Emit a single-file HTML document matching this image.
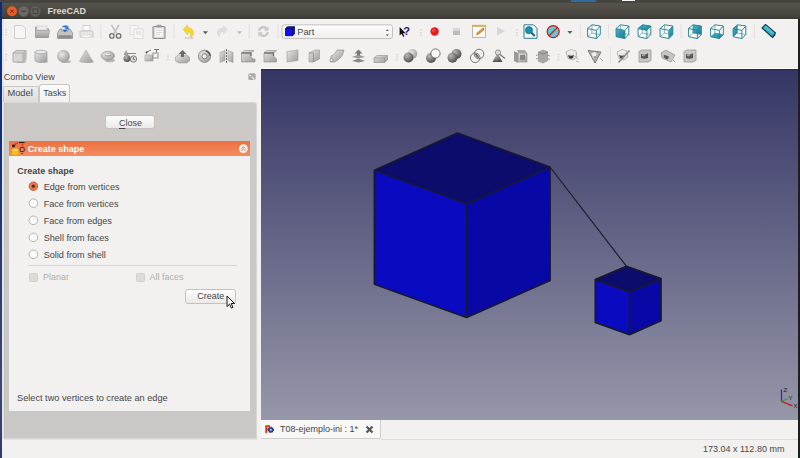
<!DOCTYPE html><html><head><meta charset="utf-8"><style>
*{margin:0;padding:0;box-sizing:border-box}
html,body{width:800px;height:458px;overflow:hidden;background:#f2f1f0;font-family:"Liberation Sans",sans-serif}
.a{position:absolute}
.t{position:absolute;white-space:nowrap;line-height:1}
</style></head><body><div class="a" style="left:0px;top:0px;width:800px;height:19px;background:linear-gradient(#5b5850,#4e4b45 50%,#403e39)"></div>
<div class="a" style="left:0px;top:0px;width:800px;height:2.6px;background:#47453f"></div>
<div class="a" style="left:0px;top:18.2px;width:800px;height:1px;background:#37352f"></div>
<div class="a" style="left:0px;top:19.2px;width:800px;height:1.3px;background:#f9f9f7"></div>
<div class="a" style="left:571px;top:0px;width:25px;height:1.6px;background:#2a7ac0;opacity:.75"></div>
<div class="a" style="left:622px;top:0px;width:12.5px;height:1.2px;background:#f4f4f4"></div>
<svg class="a" style="left:0px;top:0px" width="100" height="19" viewBox="0 0 100 19"><circle cx="12" cy="11.3" r="5" fill="#ec5a26"/><path d="M10.4 9.7l3.2 3.2M13.6 9.7l-3.2 3.2" stroke="#6e2e16" stroke-width="1"/><circle cx="23.6" cy="11.3" r="5.2" fill="#6a6964" stroke="#55544f" stroke-width=".6"/><path d="M21.2 11.3h4.8" stroke="#45443f" stroke-width="1.2"/><circle cx="35.4" cy="11.3" r="5.2" fill="#62615c" stroke="#55544f" stroke-width=".6"/><rect x="33" y="8.9" width="4.8" height="4.8" fill="none" stroke="#45443f" stroke-width="1"/></svg>
<div class="t" style="left:47.5px;top:6.98px;font-size:9px;color:#dfdbd2;font-weight:bold;">FreeCAD</div>
<div class="a" style="left:0px;top:2px;width:2.4px;height:456px;background:linear-gradient(#0a2c80,#12307a 30%,#2a3c74 60%,#3a4a72 85%,#2e3c68)"></div>
<div class="a" style="left:2.4px;top:19px;width:1.2px;height:420px;background:#e6e4e1"></div>
<div class="a" style="left:798px;top:19px;width:1px;height:439px;background:#d8d6d3"></div>
<div class="a" style="left:798.3px;top:19px;width:1.7px;height:439px;background:#1e1e1e"></div>
<svg class="a" style="left:0px;top:0px" width="800" height="70" viewBox="0 0 800 70"><defs><linearGradient id="gG" x1="0" y1="0" x2="1" y2="1"><stop offset="0" stop-color="#e6e6e6"/><stop offset="1" stop-color="#9a9a9a"/></linearGradient><linearGradient id="gL" x1="0" y1="0" x2="0" y2="1"><stop offset="0" stop-color="#f4f4f4"/><stop offset="1" stop-color="#d8d8d8"/></linearGradient><radialGradient id="gS" cx=".35" cy=".35" r=".7"><stop offset="0" stop-color="#e8e8e8"/><stop offset="1" stop-color="#9c9c9c"/></radialGradient><radialGradient id="gD" cx=".35" cy=".3" r=".75"><stop offset="0" stop-color="#b8b8b8"/><stop offset="1" stop-color="#4a4a4a"/></radialGradient><linearGradient id="gT" x1="0" y1="0" x2="1" y2="1"><stop offset="0" stop-color="#4ab8d0"/><stop offset="1" stop-color="#137a92"/></linearGradient><linearGradient id="gCombo" x1="0" y1="0" x2="0" y2="1"><stop offset="0" stop-color="#fdfdfd"/><stop offset="1" stop-color="#efeeec"/></linearGradient></defs><rect x="5" y="29.0" width="2" height="1.2" fill="#d8d6d1"/><rect x="5" y="31.5" width="2" height="1.2" fill="#d8d6d1"/><rect x="5" y="34.0" width="2" height="1.2" fill="#d8d6d1"/><rect x="5" y="54.0" width="2" height="1.2" fill="#d8d6d1"/><rect x="5" y="56.5" width="2" height="1.2" fill="#d8d6d1"/><rect x="5" y="59.0" width="2" height="1.2" fill="#d8d6d1"/><path d="M14.5 25.5h8l3 3v10h-11z" fill="#f6f6f6" stroke="#cfcfcf" stroke-width="1"/><defs><linearGradient id="gF" x1="0" y1="0" x2="0" y2="1"><stop offset="0" stop-color="#c8c8c8"/><stop offset="1" stop-color="#9c9c9c"/></linearGradient></defs><path d="M35.5 27h5l1 1.5h7v9h-13z" fill="#a8a8a8" stroke="#9a9a9a" stroke-width=".7"/><rect x="37" y="26" width="10" height="4" fill="#ececec" stroke="#c8c8c8" stroke-width=".5"/><path d="M35.5 30.5h14.5l-2 7h-12.5z" fill="url(#gF)" stroke="#999" stroke-width=".5"/><path d="M57.5 33l2.5-4h2v2h6v-2h2l2.5 4v5.5h-15z" fill="#c4c4c4" stroke="#8e8e8e" stroke-width=".8"/><rect x="58.3" y="35.3" width="13.4" height="2.6" fill="#8a8a8a"/><path d="M61.5 27.5c1.5-2.5 4.5-3 6.5-1.5v-1l1 4.5-4.5-.5 1.5-1c-1.5-1-3-.8-4.5-.5z" fill="#3b7fd0"/><path d="M62.5 29.5h5l-2.5 3z" fill="#2f6fc0"/><rect x="83" y="25.5" width="7" height="5" fill="#fafafa" stroke="#cfcfcf"/><path d="M80 31h13v6h-13z" fill="#e6e6e6" stroke="#c8c8c8"/><rect x="82" y="35" width="9" height="2.5" fill="#f6f6f6" stroke="#cfcfcf" stroke-width=".6"/><rect x="100.5" y="24" width="1" height="15" fill="#e2e0dc"/><path d="M111.5 24.8l5 8.6M119 24.8l-5 8.6" stroke="#c0c0c0" stroke-width="1.6"/><circle cx="111.9" cy="35.9" r="2.2" fill="none" stroke="#707070" stroke-width="1.3"/><circle cx="118.6" cy="35.9" r="2.2" fill="none" stroke="#707070" stroke-width="1.3"/><rect x="130" y="25.5" width="8" height="9" fill="#f4f4f4" stroke="#e0e0e0"/><rect x="134" y="29" width="9" height="9.5" fill="#f6f6f6" stroke="#dcdcdc"/><rect x="136" y="31" width="5" height="4" fill="#e6e6e6"/><rect x="153" y="26.5" width="12" height="12" rx="1" fill="#d8d8d8" stroke="#8e8e8e" stroke-width="1.1"/><rect x="155" y="28.3" width="8" height="8.5" fill="#f6f6f6"/><path d="M156 30.5h6M156 32.5h6M156 34.5h4" stroke="#cfcfcf" stroke-width=".7"/><rect x="156.5" y="24.8" width="5" height="2.6" rx=".6" fill="#a0a0a0"/><rect x="173.5" y="24" width="1" height="15" fill="#e2e0dc"/><ellipse cx="189" cy="38" rx="5" ry="1.2" fill="#d8d8d8"/><path d="M183 29.5l4.5-4.5v2.7c3.8 0 6 2.2 6 5.3 0 2-1.2 3.6-2.8 4.5 .8-3-1-5.5-3.2-5.5v3z" fill="#f4d830" stroke="#dcc010" stroke-width=".5"/><path d="M202.8 31.2h5.2l-2.6 3z" fill="#5e5e5e"/><path d="M227.5 29.5l-4.5-4.5v2.7c-3.8 0-6 2.2-6 5.3 0 2 1.2 3.6 2.8 4.5-.8-3 1-5.5 3.2-5.5v3z" fill="#dcdcdc"/><path d="M237 31.2h5l-2.5 3z" fill="#bdbdbd"/><rect x="248.8" y="24" width="1" height="15" fill="#e2e0dc"/><path d="M258 31a5.3 5.3 0 0 1 9.2-3.5l1.3-1.3v4.6h-4.6l1.5-1.5a3.2 3.2 0 0 0-5.3 1.7z" fill="#c8c8c8"/><path d="M268.8 32a5.3 5.3 0 0 1-9.2 3.5l-1.3 1.3v-4.6h4.6l-1.5 1.5a3.2 3.2 0 0 0 5.3-1.7z" fill="#c8c8c8"/><rect x="277.5" y="24" width="1" height="15" fill="#e2e0dc"/><rect x="282" y="24.8" width="110.5" height="13.8" rx="2.5" fill="url(#gCombo)" stroke="#c3c0bc" stroke-width="1"/><path d="M285.5 28.5l2-1.8h7v7.2l-2 1.8h-7z" fill="#1010e8" stroke="#050560" stroke-width=".8"/><path d="M285.5 28.5h7v7.2M292.5 28.5l2-1.8" stroke="#050560" stroke-width=".7" fill="none"/><path d="M385.8 31h3l-1.5-1.8zM385.8 34.5h3l-1.5 1.8z" fill="#555"/><text x="403.3" y="35.2" font-size="11" font-weight="bold" fill="#16168a" font-family="Liberation Sans">?</text><path d="M399.6 27v8.6l2-1.9 1.6 3.2 1.2-.6-1.5-3.1h2.8z" fill="#111"/><rect x="420" y="29.5" width="2" height="1.2" fill="#d8d6d1"/><rect x="420" y="32.0" width="2" height="1.2" fill="#d8d6d1"/><rect x="420" y="34.5" width="2" height="1.2" fill="#d8d6d1"/><circle cx="434.6" cy="31.5" r="4.2" fill="#e81c1c"/><circle cx="433.6" cy="30.3" r="1.6" fill="#f67070" opacity=".6"/><rect x="453" y="28" width="7" height="7" fill="#bcbcbc"/><rect x="453" y="28" width="7" height="3" fill="#d6d6d6"/><rect x="472.5" y="25.5" width="13" height="12" fill="#fbfbf6" stroke="#a8a89c" stroke-width=".8"/><rect x="472.5" y="24.8" width="13" height="2.2" fill="#cdb868"/><path d="M476.5 35l.8-2.2 5.2-4.2 1.3 1.3-5.2 4.2z" fill="#e8962a" stroke="#9a6018" stroke-width=".5"/><path d="M482.5 28.6l1.3 1.3.9-.8-1.3-1.3z" fill="#e05050"/><path d="M497 26.8v8.7l8-4.35z" fill="#d6d6d6"/><rect x="516" y="29.5" width="2" height="1.2" fill="#d8d6d1"/><rect x="516" y="32.0" width="2" height="1.2" fill="#d8d6d1"/><rect x="516" y="34.5" width="2" height="1.2" fill="#d8d6d1"/><path d="M524 24.8h9.5l3.5 3.5v10h-13z" fill="#f6fafb" stroke="#2f7d90" stroke-width="1"/><circle cx="529" cy="30.2" r="3.6" fill="#1d8fb0" stroke="#0e5a70" stroke-width=".6"/><path d="M531.5 32.8l3.2 3.2" stroke="#1a6a80" stroke-width="2.2"/><circle cx="553.2" cy="31.6" r="5.6" fill="#5ac8d8"/><path d="M549.5 35l7.5-7.2" stroke="#f0e060" stroke-width="1.4"/><circle cx="553.2" cy="31.6" r="6" fill="none" stroke="#b71c1c" stroke-width="1.3"/><path d="M549 35.8l8.4-8.4" stroke="#b71c1c" stroke-width="1.3"/><path d="M567.3 31h5.2l-2.6 3z" fill="#5e5e5e"/><rect x="580" y="24" width="1" height="15" fill="#e2e0dc"/><polygon points="587.5,28.6 592.0,24.8 600.3,26.0 600.3,34.5 596.4,38.6 587.7,36.7" fill="#fbfdfd"/><polygon points="587.5,28.6 592.0,24.8 600.3,26.0 600.3,34.5 596.4,38.6 587.7,36.7" fill="none" stroke="#2f8698" stroke-width="1" stroke-linejoin="round"/><path d="M587.5 28.6L596.4 30.4L600.3 26.0M596.4 30.4L596.4 38.6" stroke="#2f8698" stroke-width="1" fill="none"/><path d="M592.0 24.8L591.8 33.1L600.3 34.5M591.8 33.1L587.7 36.7" stroke="#2f8698" stroke-width=".8" fill="none" opacity=".75"/><rect x="608" y="24" width="1" height="15" fill="#e2e0dc"/><polygon points="616.0,28.6 620.5,24.8 628.8,26.0 628.8,34.5 624.9,38.6 616.2,36.7" fill="#fbfdfd"/><polygon points="616.0,28.6 624.9,30.4 624.9,38.6 616.2,36.7" fill="url(#gT)"/><polygon points="616.0,28.6 620.5,24.8 628.8,26.0 628.8,34.5 624.9,38.6 616.2,36.7" fill="none" stroke="#2f8698" stroke-width="1" stroke-linejoin="round"/><path d="M616.0 28.6L624.9 30.4L628.8 26.0M624.9 30.4L624.9 38.6" stroke="#2f8698" stroke-width="1" fill="none"/><path d="M620.5 24.8L620.3 33.1L628.8 34.5M620.3 33.1L616.2 36.7" stroke="#2f8698" stroke-width=".8" fill="none" opacity=".75"/><polygon points="638.0,28.6 642.5,24.8 650.8,26.0 650.8,34.5 646.9,38.6 638.2,36.7" fill="#fbfdfd"/><polygon points="638.0,28.6 646.9,30.4 650.8,26.0 642.5,24.8" fill="url(#gT)"/><polygon points="638.0,28.6 642.5,24.8 650.8,26.0 650.8,34.5 646.9,38.6 638.2,36.7" fill="none" stroke="#2f8698" stroke-width="1" stroke-linejoin="round"/><path d="M638.0 28.6L646.9 30.4L650.8 26.0M646.9 30.4L646.9 38.6" stroke="#2f8698" stroke-width="1" fill="none"/><path d="M642.5 24.8L642.3 33.1L650.8 34.5M642.3 33.1L638.2 36.7" stroke="#2f8698" stroke-width=".8" fill="none" opacity=".75"/><polygon points="660.0,28.6 664.5,24.8 672.8,26.0 672.8,34.5 668.9,38.6 660.2,36.7" fill="#fbfdfd"/><polygon points="668.9,30.4 672.8,26.0 672.8,34.5 668.9,38.6" fill="url(#gT)"/><polygon points="660.0,28.6 664.5,24.8 672.8,26.0 672.8,34.5 668.9,38.6 660.2,36.7" fill="none" stroke="#2f8698" stroke-width="1" stroke-linejoin="round"/><path d="M660.0 28.6L668.9 30.4L672.8 26.0M668.9 30.4L668.9 38.6" stroke="#2f8698" stroke-width="1" fill="none"/><path d="M664.5 24.8L664.3 33.1L672.8 34.5M664.3 33.1L660.2 36.7" stroke="#2f8698" stroke-width=".8" fill="none" opacity=".75"/><rect x="680.6" y="24" width="1" height="15" fill="#e2e0dc"/><polygon points="688.5,28.6 693.0,24.8 701.3,26.0 701.3,34.5 697.4,38.6 688.7,36.7" fill="#fbfdfd"/><polygon points="693.0,24.8 701.3,26.0 701.3,34.5 692.8,33.1" fill="url(#gT)"/><polygon points="688.5,28.6 693.0,24.8 701.3,26.0 701.3,34.5 697.4,38.6 688.7,36.7" fill="none" stroke="#2f8698" stroke-width="1" stroke-linejoin="round"/><path d="M688.5 28.6L697.4 30.4L701.3 26.0M697.4 30.4L697.4 38.6" stroke="#2f8698" stroke-width="1" fill="none"/><path d="M693.0 24.8L692.8 33.1L701.3 34.5M692.8 33.1L688.7 36.7" stroke="#2f8698" stroke-width=".8" fill="none" opacity=".75"/><polygon points="710.5,28.6 715.0,24.8 723.3,26.0 723.3,34.5 719.4,38.6 710.7,36.7" fill="#fbfdfd"/><polygon points="710.7,36.7 719.4,38.6 723.3,34.5 714.8,33.1" fill="url(#gT)"/><polygon points="710.5,28.6 715.0,24.8 723.3,26.0 723.3,34.5 719.4,38.6 710.7,36.7" fill="none" stroke="#2f8698" stroke-width="1" stroke-linejoin="round"/><path d="M710.5 28.6L719.4 30.4L723.3 26.0M719.4 30.4L719.4 38.6" stroke="#2f8698" stroke-width="1" fill="none"/><path d="M715.0 24.8L714.8 33.1L723.3 34.5M714.8 33.1L710.7 36.7" stroke="#2f8698" stroke-width=".8" fill="none" opacity=".75"/><polygon points="733.0,28.6 737.5,24.8 745.8,26.0 745.8,34.5 741.9,38.6 733.2,36.7" fill="#fbfdfd"/><polygon points="733.0,28.6 737.5,24.8 737.3,33.1 733.2,36.7" fill="url(#gT)"/><polygon points="733.0,28.6 737.5,24.8 745.8,26.0 745.8,34.5 741.9,38.6 733.2,36.7" fill="none" stroke="#2f8698" stroke-width="1" stroke-linejoin="round"/><path d="M733.0 28.6L741.9 30.4L745.8 26.0M741.9 30.4L741.9 38.6" stroke="#2f8698" stroke-width="1" fill="none"/><path d="M737.5 24.8L737.3 33.1L745.8 34.5M737.3 33.1L733.2 36.7" stroke="#2f8698" stroke-width=".8" fill="none" opacity=".75"/><rect x="753.8" y="24" width="1" height="15" fill="#e2e0dc"/><path d="M762 28l3.5-3.5 10 8.5-3.5 4z" fill="#3aa8c8" stroke="#14404e" stroke-width="1.1" stroke-linejoin="round"/><path d="M772 37l3.5-4v2l-3 3.5z" fill="#1a4a58"/><path d="M764 27.5l2-2 8 7-1.5 1.5z" fill="#6ac8e0" opacity=".6"/><ellipse cx="21" cy="61.5" rx="5" ry="1.6" fill="#8a8a8a" opacity=".55"/><path d="M13 53l3-2.5h10v9l-3 2.5h-10z" fill="#d6d6d6" stroke="#a2a2a2" stroke-width=".8"/><path d="M13 53h10v9M23 53l3-2.5" fill="none" stroke="#a2a2a2" stroke-width=".8"/><path d="M23 53l3-2.5v9l-3 2.5z" fill="#b8b8b8"/><ellipse cx="43" cy="61.5" rx="5" ry="1.6" fill="#8a8a8a" opacity=".55"/><path d="M35 52v8.5c0 1.1 2.7 1.8 6 1.8s6-.7 6-1.8V52z" fill="url(#gG)" stroke="#a2a2a2" stroke-width=".8"/><ellipse cx="41" cy="52" rx="6" ry="1.7" fill="#ececec" stroke="#a2a2a2" stroke-width=".8"/><ellipse cx="66" cy="61.5" rx="5" ry="1.6" fill="#8a8a8a" opacity=".55"/><circle cx="63.5" cy="56.2" r="6" fill="url(#gS)" stroke="#a8a8a8" stroke-width=".6"/><ellipse cx="89" cy="61.5" rx="5" ry="1.6" fill="#8a8a8a" opacity=".55"/><path d="M86 50l-6.5 11c0 1 3 1.5 6.5 1.5s6.5-.5 6.5-1.5z" fill="url(#gG)" stroke="#a8a8a8" stroke-width=".6"/><ellipse cx="110" cy="60.5" rx="5" ry="1.8" fill="#8a8a8a" opacity=".55"/><ellipse cx="107.8" cy="55.8" rx="6.8" ry="4.6" fill="url(#gS)" stroke="#9a9a9a" stroke-width=".6"/><ellipse cx="107.8" cy="55" rx="3" ry="1.4" fill="#8a8a8a"/><ellipse cx="107.8" cy="54.5" rx="2.7" ry="1" fill="#eee"/><path d="M126 50l-2.5 5h5z" fill="#a0a0a0"/><rect x="127" y="53" width="9" height="1" fill="#8a8a8a"/><circle cx="127" cy="58.5" r="3.5" fill="url(#gD)"/><circle cx="133.5" cy="59" r="3.2" fill="#d8d8d8" stroke="#6a6a6a" stroke-width=".8"/><path d="M133.5 57v2.5h1.5" stroke="#555" stroke-width=".7" fill="none"/><rect x="145" y="55" width="8" height="6" fill="url(#gG)" stroke="#9a9a9a" stroke-width=".6"/><rect x="153" y="53" width="5" height="5" fill="#f4f4f4" stroke="#7a7a7a" stroke-width=".8"/><path d="M147 52l4-2M154 49.5h5M156.5 49.5v3" stroke="#6a6a6a" stroke-width=".9"/><circle cx="146.5" cy="52.5" r="1" fill="#444"/><rect x="167" y="54.0" width="2" height="1.2" fill="#d8d6d1"/><rect x="167" y="56.5" width="2" height="1.2" fill="#d8d6d1"/><rect x="167" y="59.0" width="2" height="1.2" fill="#d8d6d1"/><path d="M175.5 57l3-2h8l3 2v4l-3 2h-8l-3-2z" fill="url(#gG)" stroke="#9a9a9a" stroke-width=".6"/><path d="M182.5 50l-4 4h2.5v3h3v-3h2.5z" fill="#6a6a6a"/><circle cx="204.5" cy="56.3" r="6.2" fill="url(#gS)" stroke="#8a8a8a" stroke-width=".8"/><circle cx="204.5" cy="56.3" r="2.5" fill="#f0f0f0" stroke="#6a6a6a" stroke-width=".8"/><path d="M206 51a5.5 5.5 0 0 1 4 5" stroke="#555" stroke-width="1.4" fill="none"/><path d="M220 52.5l5-2v10l-5 2z" fill="url(#gG)" stroke="#9a9a9a" stroke-width=".6"/><path d="M228 50.5l5 2v10l-5-2z" fill="url(#gG)" stroke="#9a9a9a" stroke-width=".6"/><path d="M226.5 49v14" stroke="#6a6a6a" stroke-width="1" stroke-dasharray="2 1"/><path d="M241.5 53l3-2.5h9.5l-3 2.5zM241.5 53h9.5v3c0 2 1.5 3 4 3v3h-13.5z" fill="url(#gG)" stroke="#8a8a8a" stroke-width=".6"/><path d="M241.5 53h9.5v3" stroke="#6a6a6a" stroke-width="1.2" fill="none"/><path d="M264 53l3-2.5h9.5l-3 2.5zM264 53h9.5v3l3 3v3h-12.5z" fill="url(#gG)" stroke="#8a8a8a" stroke-width=".6"/><path d="M264 53h9.5v3" stroke="#6a6a6a" stroke-width="1.2" fill="none"/><path d="M287 51.5l11-1.5v10.5l-11 1.5z" fill="url(#gG)" stroke="#9a9a9a" stroke-width=".6"/><path d="M309 53l6-3h4.5v9l-6 3h-4.5z" fill="url(#gG)" stroke="#9a9a9a" stroke-width=".6"/><path d="M309 53h4.5v9" stroke="#7a7a7a" stroke-width=".6" fill="none"/><path d="M331 56c3-1 5-4 6-6h7l-1.5 5c-2 3-4 5-8 7h-4z" fill="url(#gG)" stroke="#8a8a8a" stroke-width=".6"/><circle cx="331.5" cy="60" r="1.6" fill="#eee" stroke="#777" stroke-width=".6"/><path d="M352 61l6.5-2.5 6.5 2.5-6.5 1.5z" fill="#888"/><path d="M352 57l6.5-2.5 6.5 2.5-6.5 1.5z" fill="#999"/><path d="M358.5 49.5l-4 4h2.5v2h3v-2h2.5z" fill="#777"/><path d="M374 58l3-2.5h10.5v4.5l-3 2.5h-10.5z" fill="url(#gG)" stroke="#8a8a8a" stroke-width=".6"/><path d="M374 58h10.5v4.5M384.5 58l3-2.5" stroke="#8a8a8a" stroke-width=".6" fill="none"/><rect x="396" y="54.0" width="2" height="1.2" fill="#d8d6d1"/><rect x="396" y="56.5" width="2" height="1.2" fill="#d8d6d1"/><rect x="396" y="59.0" width="2" height="1.2" fill="#d8d6d1"/><circle cx="412.5" cy="53.8" r="4.8" fill="url(#gS)"/><circle cx="408.5" cy="57.5" r="5" fill="url(#gD)"/><circle cx="431" cy="58" r="5" fill="url(#gD)"/><circle cx="435.5" cy="53.5" r="4.6" fill="#fafafa" stroke="#555" stroke-width=".8"/><circle cx="456.5" cy="54" r="5" fill="url(#gD)"/><circle cx="452.5" cy="57.8" r="5" fill="url(#gD)"/><circle cx="479" cy="54" r="4.8" fill="none" stroke="#6a6a6a" stroke-width=".9"/><circle cx="475.2" cy="57.8" r="4.8" fill="none" stroke="#6a6a6a" stroke-width=".9"/><path d="M475 53.5c2 0 4 2 4 4.5-2 0-4-2-4-4.5z" fill="#6a6a6a"/><path d="M497.5 53l-5 9h10z" fill="url(#gD)"/><circle cx="498" cy="52.5" r="2.6" fill="#ddd" stroke="#777" stroke-width=".8"/><path d="M500 54.5l5 4" stroke="#777" stroke-width="1.2"/><path d="M514 51l4 2v10l-4-2z" fill="#9a9a9a"/><path d="M518 53h9v9h-9z" fill="url(#gG)" stroke="#8a8a8a" stroke-width=".6"/><path d="M517 50h8l2 3h-9z" fill="#aaa"/><rect x="520" y="55" width="5" height="5" fill="#888"/><path d="M538 52l5-2.5 5 2v9.5l-5 2.5-5-2z" fill="#9a9a9a" opacity=".85"/><path d="M538 52l5 2 5-2" stroke="#777" fill="none" stroke-width=".7"/><path d="M536 55.5l3-1M536 59l3-1M547 55l3 1M547 58.5l3 1" stroke="#999" stroke-width="1"/><rect x="557.5" y="54.0" width="2" height="1.2" fill="#d8d6d1"/><rect x="557.5" y="56.5" width="2" height="1.2" fill="#d8d6d1"/><rect x="557.5" y="59.0" width="2" height="1.2" fill="#d8d6d1"/><path d="M566 52l5-2.5 5 1.5 1 6-4 3-5-1.5z" fill="url(#gL)" stroke="#a8a8a8" stroke-width=".8"/><path d="M568 55c2 1 4 1 6 0l-1 3c-1.5 1-3 1-4 0z" fill="#3a3a3a"/><path d="M575 56l3 3.5M576 61l3 1" stroke="#b8b8b8" stroke-width="1"/><path d="M588 50.5l13 1.5-6 11z" fill="#b0b0b0" stroke="#7a7a7a" stroke-width="1"/><path d="M591.5 53.5l3-1.5 2 1.5-1 4-2 1z" fill="#eee"/><path d="M593 56c1 1 2 1 3 0l-1 2z" fill="#333"/><path d="M600 58l3 3" stroke="#aaa"/><rect x="609.8" y="47" width="1" height="17" fill="#e2e0dc"/><path d="M617 52l5-2.5 5 1.5 1 6-4 3-5-1.5z" fill="url(#gL)" stroke="#a8a8a8" stroke-width=".8"/><path d="M619 55c2 1 4 1 6 0l-1 3c-1.5 1-3 1-4 0z" fill="#4a4a4a"/><path d="M618.5 62.5l11-12" stroke="#8a8a8a" stroke-width="1.5"/><path d="M639 51.5l3-1.5h9v10.5l-3 1.5h-9z" fill="#c6c6c6" stroke="#9a9a9a" stroke-width=".8"/><path d="M641 54c2 1 5 1 7-1v5c-2 1-5 1-7 0z" fill="#555"/><path d="M642 55.5c1 0 2 .5 3 0" stroke="#ddd" stroke-width=".8"/><path d="M661 53l5-3 9 5-4 7-9-4z" fill="#c4c4c4" stroke="#9a9a9a" stroke-width=".8"/><path d="M664 55c2 0 4 1 5 2l-1.5 2.5c-2-.5-3-1.5-4-3z" fill="#555"/><path d="M672 59l3 3" stroke="#aaa"/><path d="M684 51.5l3-1.5h9v10.5l-3 1.5h-9z" fill="#c6c6c6" stroke="#9a9a9a" stroke-width=".8"/><path d="M686 54c2 1 5 1 7-1v5c-2 1-5 1-7 0z" fill="#555"/><path d="M687 55.5c1 0 2 .5 3 0" stroke="#ddd" stroke-width=".8"/></svg>
<div class="t" style="left:297.2px;top:27.73px;font-size:9.3px;color:#464646;font-weight:normal;">Part</div>
<div class="t" style="left:3.8px;top:73.18px;font-size:9px;color:#464646;font-weight:normal;">Combo View</div>
<svg class="a" style="left:248px;top:72.8px" width="8" height="7.2" viewBox="0 0 8 7.2"><rect x=".3" y=".3" width="7.4" height="6.8" rx="1.6" fill="#aaaaa8"/><path d="M1.6 1.8l1.6 1.4M4 3.8l.8.8M4.8 5l1.6 1.4" stroke="#fafafa" stroke-width="1.1" fill="none"/></svg>
<div class="a" style="left:3px;top:86px;width:36px;height:16px;background:linear-gradient(#efeeec,#dedcd9);border:1px solid #c9c7c3;border-bottom:none;border-radius:2px 2px 0 0"></div>
<div class="a" style="left:39px;top:84px;width:31px;height:19px;background:linear-gradient(#fbfbfa,#f2f1f0);border:1px solid #c9c7c3;border-bottom:none;border-radius:3px 3px 0 0"></div>
<div class="t" style="left:7.4px;top:88.93px;font-size:9.3px;color:#464646;font-weight:normal;">Model</div>
<div class="t" style="left:43.2px;top:88.98px;font-size:9px;color:#464646;font-weight:normal;">Tasks</div>
<div class="a" style="left:3.6px;top:101.8px;width:253.4px;height:337.4px;background:linear-gradient(#ccc9c6,#c9c8c6);border:1px solid #d9d6d3;border-left-color:#c4c1bd;border-radius:0 3px 0 0"></div>
<div class="a" style="left:3.6px;top:439px;width:253.4px;height:1px;background:#e4e2df"></div>
<div class="a" style="left:105px;top:115px;width:50px;height:14px;background:linear-gradient(#fdfdfd,#eceae8);border:1px solid #c4c1bd;border-radius:3px"></div>
<div class="t" style="left:119px;top:118.98px;font-size:9px;color:#464646;font-weight:normal;"><u style='text-decoration-thickness:1px;text-underline-offset:1.5px'>C</u>lose</div>
<div class="a" style="left:9px;top:141px;width:241px;height:14.7px;background:linear-gradient(#ed7040,#f38d62)"></div>
<svg class="a" style="left:8px;top:139px" width="22" height="18" viewBox="0 0 22 18"><circle cx="5.5" cy="6.9" r="1.4" fill="#111"/><path d="M7 5.6l3-2" stroke="#d81010" stroke-width="1.3" stroke-dasharray="1.3 .6"/><rect x="11.2" y="3" width="5.3" height="1.1" fill="#2a1a10"/><path d="M13.3 5.4h2.4l-1.2 1.7z" fill="#d81010"/><rect x="12.2" y="8.4" width="4" height="4.2" rx=".8" fill="none" stroke="#3a2a20" stroke-width="1"/><path d="M13 14h2.6l-1.8 1.6z" fill="#d81010"/><path d="M4 10.8c0-.6 1.5-1.1 3.2-1.1s3.2.5 3.2 1.1v4.3c0 .6-1.5 1.1-3.2 1.1s-3.2-.5-3.2-1.1z" fill="#f0c010"/><ellipse cx="7.2" cy="10.8" rx="3.2" ry="1.1" fill="#f8e040"/></svg>
<div class="t" style="left:27.7px;top:144.58px;font-size:9px;color:#ffffff;font-weight:bold;">Create shape</div>
<svg class="a" style="left:238px;top:144px" width="11" height="10" viewBox="0 0 11 10"><circle cx="5.4" cy="4.7" r="4.4" fill="#fbf3ee"/><path d="M3.2 4.8l2.2-2 2.2 2M3.2 7l2.2-2 2.2 2" stroke="#d26a3c" stroke-width=".9" fill="none"/></svg>
<div class="a" style="left:9px;top:155.7px;width:241px;height:255px;background:#f2f1f0"></div>
<div class="t" style="left:17.3px;top:166.58px;font-size:9px;color:#464646;font-weight:bold;">Create shape</div>
<div class="t" style="left:43.7px;top:182.60px;font-size:9.1px;color:#464646;font-weight:normal;">Edge from vertices</div>
<div class="t" style="left:43.7px;top:199.60px;font-size:9.1px;color:#464646;font-weight:normal;">Face from vertices</div>
<div class="t" style="left:43.7px;top:216.70px;font-size:9.1px;color:#464646;font-weight:normal;">Face from edges</div>
<div class="t" style="left:43.7px;top:233.80px;font-size:9.1px;color:#464646;font-weight:normal;">Shell from faces</div>
<div class="t" style="left:43.7px;top:250.80px;font-size:9.1px;color:#464646;font-weight:normal;">Solid from shell</div>
<svg class="a" style="left:0px;top:0px" width="260" height="300" viewBox="0 0 260 300"><circle cx="33.4" cy="186.2" r="4.3" fill="#e57852" stroke="#c4502a" stroke-width=".8"/><circle cx="33.4" cy="186.2" r="1.6" fill="#5a2a1a"/><circle cx="33.4" cy="203.2" r="4.3" fill="#fbfbfb" stroke="#a5a29e" stroke-width=".8"/><circle cx="33.4" cy="220.3" r="4.3" fill="#fbfbfb" stroke="#a5a29e" stroke-width=".8"/><circle cx="33.4" cy="237.4" r="4.3" fill="#fbfbfb" stroke="#a5a29e" stroke-width=".8"/><circle cx="33.4" cy="254.4" r="4.3" fill="#fbfbfb" stroke="#a5a29e" stroke-width=".8"/></svg>
<div class="a" style="left:27.6px;top:265px;width:209px;height:1px;background:#d9d7d4"></div>
<div class="a" style="left:29px;top:273px;width:8.8px;height:8.6px;background:#dddbd8;border:1px solid #d3d1ce;border-radius:1.5px"></div>
<div class="t" style="left:42.9px;top:273.18px;font-size:9px;color:#b1afac;font-weight:normal;">Planar</div>
<div class="a" style="left:135.8px;top:273px;width:8.8px;height:8.6px;background:#dddbd8;border:1px solid #d3d1ce;border-radius:1.5px"></div>
<div class="t" style="left:149.5px;top:273.18px;font-size:9px;color:#b1afac;font-weight:normal;">All faces</div>
<div class="a" style="left:185.2px;top:288.5px;width:51px;height:15px;background:linear-gradient(#fdfdfd,#eceae8);border:1px solid #c4c1bd;border-radius:3px"></div>
<div class="t" style="left:197.3px;top:292.28px;font-size:9px;color:#464646;font-weight:normal;">Create</div>
<svg class="a" style="left:225px;top:295px" width="10" height="15" viewBox="0 0 10 15"><path d="M2 1v10.5l2.6-2.4 1.8 4 1.6-.7-1.8-3.9h3.4z" fill="#f4f4f4" stroke="#1a1a1a" stroke-width="1" stroke-linejoin="round"/></svg>
<div class="t" style="left:17px;top:394.01px;font-size:9.2px;color:#464646;font-weight:normal;">Select two vertices to create an edge</div>
<div class="a" style="left:261px;top:68px;width:537px;height:1px;background:#fcfcfc"></div>
<div class="a" style="left:261px;top:69px;width:537px;height:350.6px;background:linear-gradient(#353565,#9697a9)"></div>
<div class="a" style="left:261px;top:69px;width:537px;height:1px;background:#262650"></div>
<svg class="a" style="left:0px;top:0px" width="800" height="458" viewBox="0 0 800 458"><polygon points="457.5,133 550,167 466.8,203.8 374.4,170.2" fill="#0c0c6c"/><polygon points="374.4,170.2 466.8,203.8 466.5,317.5 374.4,284.3" fill="#0a0ac0"/><polygon points="466.8,203.8 550,167 550.1,280.4 466.5,317.5" fill="#0808a6"/><path d="M457.5,133 L550,167 L550.1,280.4 L466.5,317.5 L374.4,284.3 L374.4,170.2 Z M374.4,170.2 L466.8,203.8 L550,167 M466.8,203.8 L466.5,317.5" fill="none" stroke="#181830" stroke-width="1.7" stroke-linejoin="round"/><polygon points="626.4,266.2 661,278.6 629.5,292 595.3,279.6" fill="#0c0c6c"/><polygon points="595.3,279.6 629.5,292 629.5,334.6 595.3,322.4" fill="#0a0ac0"/><polygon points="629.5,292 661,278.6 661,320.8 629.5,334.6" fill="#0808a6"/><path d="M626.4,266.2 L661,278.6 L661,320.8 L629.5,334.6 L595.3,322.4 L595.3,279.6 Z M595.3,279.6 L629.5,292 L661,278.6 M629.5,292 L629.5,334.6" fill="none" stroke="#181830" stroke-width="1.7" stroke-linejoin="round"/><path d="M550,167 L626.4,266.2" stroke="#1e1e2e" stroke-width="1.2"/><path d="M781.5 401.3V389.5" stroke="#2030c0" stroke-width="1.3"/><path d="M781.5 401.3L788 398.5" stroke="#30a040" stroke-width="1.3"/><path d="M781.5 401.3L792.5 405.8" stroke="#c02020" stroke-width="1.3"/><text x="783.5" y="392" font-size="6" fill="#202020" font-family="Liberation Sans">Z</text><text x="788.5" y="400" font-size="6" fill="#202020" font-family="Liberation Sans">Y</text><text x="793.5" y="408" font-size="6" fill="#202020" font-family="Liberation Sans">X</text></svg>
<div class="a" style="left:261px;top:419.6px;width:120px;height:19.8px;background:#f8f8f7;border-right:1px solid #cfcdca;border-bottom:1px solid #cfcdca;border-radius:0 0 2px 2px"></div>
<div class="a" style="left:381px;top:438.6px;width:417px;height:1px;background:#dcdad7"></div>
<svg class="a" style="left:264px;top:424px" width="12" height="11" viewBox="0 0 12 11"><path d="M1.3 1.2h4.8v1.7h-3v1.6h2.4v1.6h-2.4v2.8h-1.8z" fill="#e83010"/><circle cx="6.8" cy="5.8" r="2.6" fill="#2848b0" stroke="#1a2a80" stroke-width="1.2" stroke-dasharray="1 .7"/><circle cx="6.8" cy="5.8" r=".9" fill="#f0f0ff"/></svg>
<div class="t" style="left:280px;top:425.48px;font-size:9px;color:#464646;font-weight:normal;">T08-ejemplo-ini : 1*</div>
<svg class="a" style="left:365px;top:425px" width="9" height="9" viewBox="0 0 9 9"><path d="M1.5 1.5L7.5 7.5M7.5 1.5L1.5 7.5" stroke="#555" stroke-width="2.2"/></svg>
<div class="t" style="left:703px;top:445.38px;font-size:9px;color:#464646;font-weight:normal;">173.04 x 112.80 mm</div></body></html>
